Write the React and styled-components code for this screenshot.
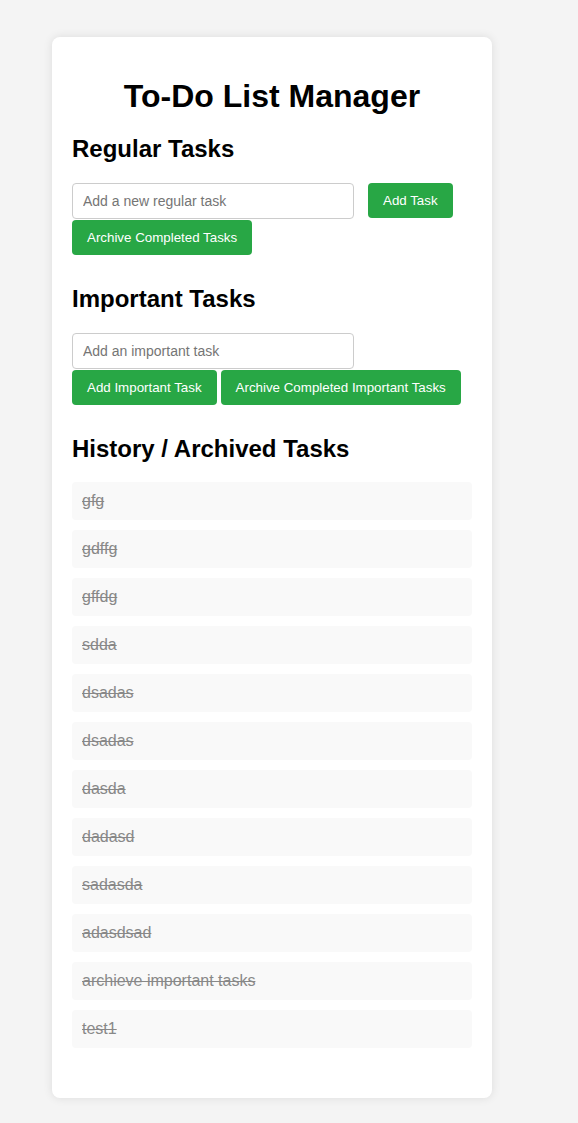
import React, { useState } from 'react';
import styled, { createGlobalStyle } from 'styled-components';

const GlobalStyle = createGlobalStyle`
	html, body {
		margin: 0;
		padding: 0;
		background: #f4f4f4;
		font-family: Arial, 'Liberation Sans', sans-serif;
	}
`;

const Page = styled.div`
	padding: 37px 0 24px 52px;
`;

const Card = styled.main`
	box-sizing: border-box;
	width: 440px;
	padding: 20px;
	background: #fff;
	border-radius: 8px;
	box-shadow: 0 0 10px rgba(0, 0, 0, 0.1);
`;

const Title = styled.h1`
	margin: 21px 0 19px;
	font-size: 32px;
	font-weight: bold;
	text-align: center;
	color: #000;
`;

const SectionTitle = styled.h2`
	margin: 0.83em 0;
	font-size: 24px;
	font-weight: bold;
	color: #000;
`;

const Controls = styled.div`
	display: flex;
	flex-wrap: wrap;
	align-items: center;
	gap: 1px 4px;
	padding-bottom: 10px;
`;

const TaskInput = styled.input`
	box-sizing: border-box;
	width: 282px;
	height: 36px;
	margin-right: 10px;
	padding: 0 10px;
	border: 1px solid #ccc;
	border-radius: 4px;
	font-family: Arial, 'Liberation Sans', sans-serif;
	font-size: 14px;
	color: #333;
	outline: none;

	&::placeholder {
		color: #757575;
	}
`;

const Button = styled.button`
	box-sizing: border-box;
	height: 35px;
	padding: 0 15px;
	border: none;
	border-radius: 4px;
	background: #28a745;
	color: #fff;
	font-family: Arial, 'Liberation Sans', sans-serif;
	font-size: 13.333px;
	cursor: pointer;
`;

const HistoryList = styled.ul`
	list-style: none;
	margin: 0 0 30px;
	padding: 0;
`;

const HistoryItem = styled.li`
	margin-bottom: 10px;
	padding: 10px;
	background: #f9f9f9;
	border-radius: 4px;
	font-size: 16px;
	line-height: 18px;
	color: #888;
	text-decoration: line-through;
`;

const archived = [
	'gfg',
	'gdffg',
	'gffdg',
	'sdda',
	'dsadas',
	'dsadas',
	'dasda',
	'dadasd',
	'sadasda',
	'adasdsad',
	'archieve important tasks',
	'test1',
];

const App = () => {
	const [regular, setRegular] = useState('');
	const [important, setImportant] = useState('');

	return (
		<>
			<GlobalStyle />
			<Page>
				<Card>
					<Title>To-Do List Manager</Title>

					<section>
						<SectionTitle>Regular Tasks</SectionTitle>
						<Controls>
							<TaskInput
								value={regular}
								onChange={(e) => setRegular(e.target.value)}
								placeholder='Add a new regular task'
							/>
							<Button>Add Task</Button>
							<Button>Archive Completed Tasks</Button>
						</Controls>
					</section>

					<section>
						<SectionTitle>Important Tasks</SectionTitle>
						<Controls>
							<TaskInput
								value={important}
								onChange={(e) => setImportant(e.target.value)}
								placeholder='Add an important task'
							/>
							<Button>Add Important Task</Button>
							<Button>Archive Completed Important Tasks</Button>
						</Controls>
					</section>

					<section>
						<SectionTitle>History / Archived Tasks</SectionTitle>
						<HistoryList>
							{archived.map((task, i) => (
								<HistoryItem key={i}>{task}</HistoryItem>
							))}
						</HistoryList>
					</section>
				</Card>
			</Page>
		</>
	);
};

export default App;
